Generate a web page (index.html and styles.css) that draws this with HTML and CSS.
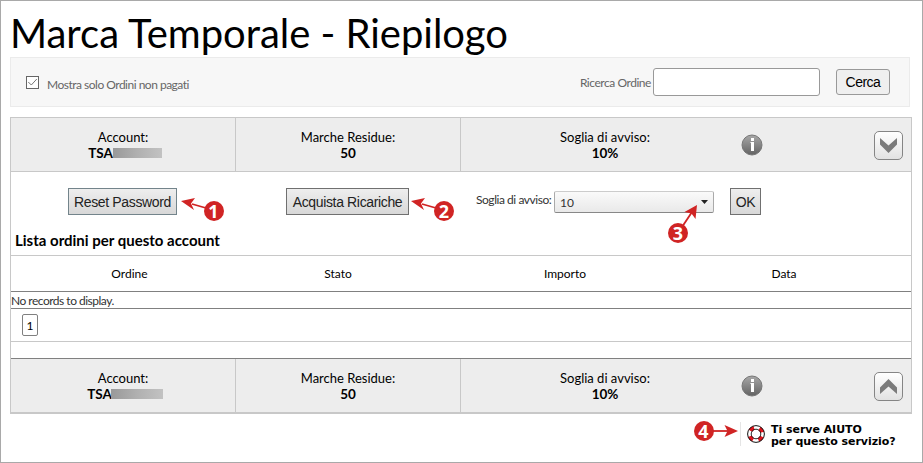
FILE: index.html
```html
<!DOCTYPE html>
<html lang="it">
<head>
    <meta charset="UTF-8">
    <title>Marca Temporale - Riepilogo</title>
    <link rel="stylesheet" href="styles.css">
</head>
<body>
    <div class="page">
        <h1>Marca Temporale - Riepilogo</h1>

        <div class="filter">
            <span class="checkbox">
                <svg width="13" height="13" viewBox="0 0 13 13"><rect x=".5" y=".5" width="12" height="12" fill="#fff" stroke="#666"/><path d="M2.300 6l3 3 5.500-6" fill="none" stroke="#777"/></svg>
            </span>
            <label class="only-unpaid">Mostra solo Ordini non pagati</label>
            <label class="search-label">Ricerca Ordine</label>
            <input type="text" class="search">
            <button class="search-btn">Cerca</button>
        </div>

        <div class="account">
            <div class="account-head">
                <div class="cell"><span class="name">Account:</span><b class="user">TSA<i class="masked"></i></b></div>
                <div class="cell"><span class="residue">Marche Residue:</span><b>50</b></div>
                <div class="cell last"><span class="threshold">Soglia di avviso:</span><b>10%</b></div>
                <svg class="info" width="22" height="22" viewBox="0 0 22 22">
                    <defs><linearGradient id="infoBg" x1="0" y1="0" x2="0" y2="1"><stop offset="0" stop-color="#a8a8a8"/><stop offset="1" stop-color="#636363"/></linearGradient></defs>
                    <circle cx="11" cy="11" r="10" fill="url(#infoBg)" stroke="#777"/>
                    <path d="M10 4h3v3h-3zM9.500 8h3.500v9h-3v-8h-.5z" fill="#fff"/>
                </svg>
                <button class="toggle"><svg width="17" height="15" viewBox="0 0 17 15"><path d="M0 0l8.500 7.500 8.500-7.500v6.500l-8.500 8.500-8.500-8.500z" fill="#7b7b7b"/></svg></button>
            </div>

            <div class="actions">
                <button class="btn reset">Reset Password</button>
                <button class="btn buy">Acquista Ricariche</button>
                <label>Soglia di avviso:</label>
                <div class="select"><span>10</span><svg width="7" height="4" viewBox="0 0 7 4"><path d="M0 0h7l-3.500 4z" fill="#222"/></svg></div>
                <button class="btn ok">OK</button>
            </div>

            <h2>Lista ordini per questo account</h2>

            <div class="orders-head">
                <span>Ordine</span>
                <span>Stato</span>
                <span>Importo</span>
                <span>Data</span>
            </div>
            <div class="no-records">No records to display.</div>
            <div class="pager"><span>1</span></div>

            <div class="account-head closed">
                <div class="cell"><span class="name">Account:</span><b class="user">TSA<i class="masked"></i></b></div>
                <div class="cell"><span class="residue">Marche Residue:</span><b>50</b></div>
                <div class="cell last"><span class="threshold">Soglia di avviso:</span><b>10%</b></div>
                <svg class="info" width="22" height="22" viewBox="0 0 22 22">
                    <circle cx="11" cy="11" r="10" fill="url(#infoBg)" stroke="#777"/>
                    <path d="M10 4h3v3h-3zM9.500 8h3.500v9h-3v-8h-.5z" fill="#fff"/>
                </svg>
                <button class="toggle"><svg width="17" height="15" viewBox="0 0 17 15"><path d="M0 15l8.500-7.500 8.500 7.500v-6.500l-8.500-8.500-8.500 8.500z" fill="#7b7b7b"/></svg></button>
            </div>
        </div>

        <div class="help">
            <svg width="18" height="18" viewBox="0 0 18 18">
                <circle cx="9" cy="9" r="6.500" fill="none" stroke="#fff" stroke-width="4"/>
                <circle cx="9" cy="9" r="6.500" fill="none" stroke="#e0141c" stroke-width="4" stroke-dasharray="4.600 5.610" stroke-dashoffset="-2.800"/>
                <circle cx="9" cy="9" r="8.400" fill="none" stroke="#111"/>
                <circle cx="9" cy="9" r="4.800" fill="none" stroke="#111" stroke-width=".9"/>
            </svg>
            <p>Ti serve AIUTO<br>per questo servizio?</p>
        </div>

        <!-- numbered callouts -->
        <svg class="marker m1" width="46" height="28" viewBox="0 0 46 28">
            <path d="M33 12L12 6" stroke="#d02424" stroke-width="1.800"/><path d="M1 3l14-3-4 5.500 3 6.500z" fill="#d02424"/>
            <circle cx="34" cy="13" r="10" fill="#d02424"/><text x="33.500" y="19.500">1</text>
        </svg>
        <svg class="marker m2" width="46" height="28" viewBox="0 0 46 28">
            <path d="M33 12L12 6" stroke="#d02424" stroke-width="1.800"/><path d="M1 3l14-3-4 5.500 3 6.500z" fill="#d02424"/>
            <circle cx="34" cy="13" r="10" fill="#d02424"/><text x="34" y="19.500">2</text>
        </svg>
        <svg class="marker m3" width="32" height="40" viewBox="0 0 32 40">
            <path d="M13 26L25 8" stroke="#d02424" stroke-width="1.800"/><path d="M30 1l-1.500 14-4-5.500-7-1.500z" fill="#d02424"/>
            <circle cx="11" cy="29" r="10" fill="#d02424"/><text x="11" y="35.500">3</text>
        </svg>
        <svg class="marker m4" width="46" height="28" viewBox="0 -3 46 28">
            <path d="M20 11h17" stroke="#d02424" stroke-width="1.800"/><path d="M45 11l-13.500 6 3-6-3-6z" fill="#d02424"/>
            <circle cx="11" cy="11" r="10" fill="#d02424"/><text x="10.500" y="17.500">4</text>
        </svg>
    </div>
</body>
</html>
```

FILE: styles.css
```css
* {
    box-sizing: border-box;
}
body {
    margin: 0;
    font-family: Lato, sans-serif;
    color: #000;
}
.page {
    position: relative;
    height: 463px;
    padding: 0 11px 0 9px;
    border: 1px solid #a9a9a9;
    background: #fff;
}
h1 {
    height: 56px;
    margin: 0;
    font-size: 40px;
    font-weight: normal;
    line-height: 48px;
    padding-top: 8px;
    letter-spacing: -0.03px;
    white-space: nowrap;
}
button {
    font-family: "Liberation Sans", Arial, sans-serif;
    padding: 0;
}
.filter {
    display: flex;
    align-items: center;
    width: 900px;
    height: 50px;
    padding: 0 19px 0 15px;
    border: 1px solid #ebebeb;
    background: #f7f7f7;
    font-size: 12px;
    letter-spacing: -0.5px;
    color: #666;
}
.checkbox {
    height: 13px;
    margin: 0 8px 0 0;
}
.checkbox svg {
    display: block;
}
.only-unpaid {
    padding-top: 5px;
}
.search-label {
    margin-left: auto;
    padding-top: 1px;
    letter-spacing: -0.45px;
}
.search {
    width: 167px;
    height: 28px;
    margin-left: 2px;
    border: 1px solid #999;
    border-radius: 3px;
}
.search-btn {
    width: 54px;
    height: 26px;
    margin-left: 16px;
    border: 1px solid #999;
    border-radius: 3px;
    background: #efefef;
    font-size: 14px;
    letter-spacing: -0.5px;
}
.account {
    width: 902px;
    margin-top: 10px;
    border: 1px solid #c8c8c8;
    border-bottom-width: 2px;
}
.account-head {
    display: flex;
    align-items: center;
    height: 54px;
    border-bottom: 1px solid #c8c8c8;
    background: #ededed;
}
.cell {
    display: flex;
    flex-direction: column;
    align-items: center;
    width: 225px;
    height: 53px;
    padding-top: 11px;
    border-right: 1px solid #c8c8c8;
    font-size: 13px;
    line-height: 16px;
}
.cell b {
    font-size: 13.5px;
}
.cell.last {
    width: 288px;
    border: none;
}
.user {
    display: flex;
    align-items: center;
    padding-left: 4px;
}
.masked {
    width: 49px;
    height: 10px;
    background: linear-gradient(to right, #999, #b0b0b0 50%, #c2c2c2);
}
.info {
    margin: 1px 0 0 -8px;
}
.toggle {
    display: flex;
    align-items: center;
    justify-content: center;
    width: 29px;
    height: 29px;
    margin: 1px 8px 0 auto;
    border: 1px solid #858585;
    border-radius: 5px;
    background: linear-gradient(#fff, #e2e2e2);
}
.actions {
    display: flex;
    height: 59px;
    padding: 16px 0 0 57px;
}
.btn {
    height: 27px;
    border: 1px solid #707070;
    background: linear-gradient(#eee, #d8d8d8);
    font-size: 14px;
    letter-spacing: -0.35px;
    color: #222;
}
.reset {
    width: 109px;
    border-color: #73848b;
}
.buy {
    width: 123px;
    margin-left: 109px;
}
.actions label {
    width: 78px;
    margin-left: 67px;
    font-size: 12px;
    letter-spacing: -0.45px;
    line-height: 23px;
    white-space: nowrap;
    color: #333;
}
.select {
    display: flex;
    align-items: center;
    justify-content: space-between;
    width: 160px;
    height: 22px;
    margin-top: 3px;
    padding: 0 5px;
    border: 1px solid #aaa;
    border-top-color: #ccc;
    border-bottom-color: #888;
    border-radius: 2px;
    background: linear-gradient(#fafafa, #e9e9e9);
    font-size: 12px;
    color: #333;
}
.ok {
    width: 31px;
    margin-left: 16px;
}
h2 {
    height: 24px;
    margin: 0;
    padding-left: 4px;
    font-size: 15px;
    line-height: 18px;
}
.orders-head {
    display: flex;
    height: 37px;
    border-top: 1px solid #c8c8c8;
    border-bottom: 1px solid #808080;
    font-size: 12px;
    line-height: 35px;
    text-align: center;
}
.orders-head span {
    width: 219px;
}
.orders-head span:first-child {
    width: 237px;
}
.orders-head span:nth-child(2) {
    width: 180px;
}
.orders-head span:nth-child(3) {
    width: 274px;
}
.orders-head span:last-child {
    width: 164px;
}
.no-records {
    height: 17px;
    border-bottom: 1px solid #808080;
    font-size: 12px;
    letter-spacing: -0.5px;
    line-height: 17px;
    color: #333;
}
.pager {
    height: 33px;
    padding: 5px 0 0 11px;
    border-bottom: 1px solid #c8c8c8;
}
.pager span {
    display: block;
    width: 16px;
    height: 22px;
    border: 1px solid #808080;
    border-radius: 2px;
    font-size: 12px;
    line-height: 22px;
    text-align: center;
}
.closed {
    margin-top: 16px;
    border-top: 1px solid #808080;
    border-bottom: none;
}
.closed .masked {
    width: 52px;
    margin-left: -1px;
}
.help {
    display: flex;
    width: 162px;
    height: 24px;
    margin: 8px 9px 0 auto;
    padding-left: 6px;
    border-left: 1px solid #e5e5e5;
}
.help svg {
    margin-top: 3px;
}
.help p {
    margin: 0 0 0 6px;
    font: bold 11px/12px "DejaVu Sans", Verdana, sans-serif;
    padding-top: 2px;
    letter-spacing: -0.04px;
    white-space: nowrap;
}
.marker {
    position: absolute;
    overflow: visible;
}
.marker text {
    font: bold 18px "Open Sans", sans-serif;
    fill: #fff;
    text-anchor: middle;
}
.m1 {
    left: 179px;
    top: 197px;
}
.m2 {
    left: 409px;
    top: 197px;
}
.m3 {
    left: 666px;
    top: 203px;
}
.m4 {
    left: 692px;
    top: 416px;
}
```
